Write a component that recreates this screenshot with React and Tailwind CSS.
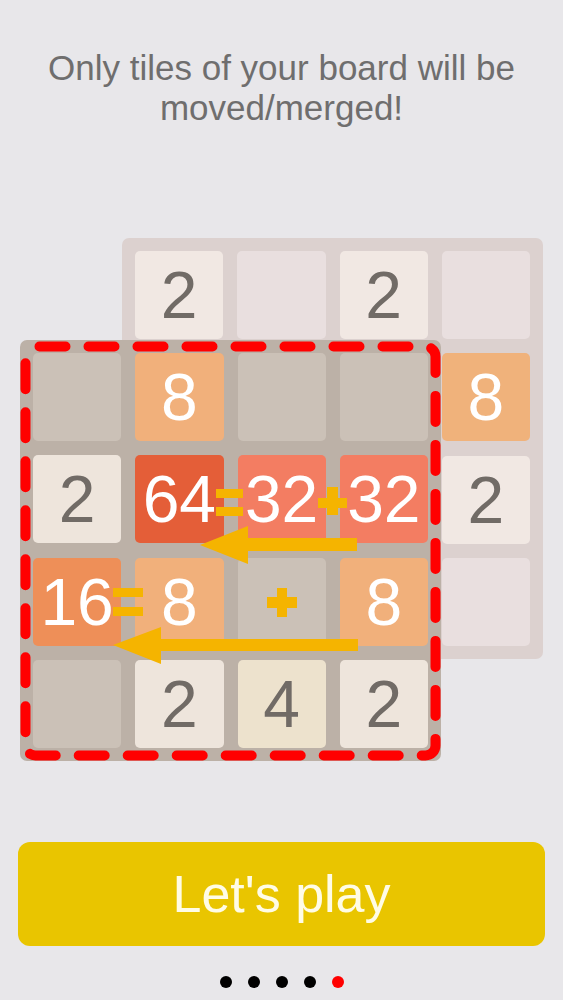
import React from "react";

const FONT = { fontFamily: '"Liberation Sans", Arial, sans-serif' };

// Tile palettes for the dimmed (rear) board and the active (front) board.
const BACK = {
  0: { bg: "bg-[#e9dfdf]", fg: "" },
  2: { bg: "bg-[#f1e8e3]", fg: "text-[#716b66]" },
  8: { bg: "bg-[#f0b27b]", fg: "text-white" },
};

const FRONT = {
  0: { bg: "bg-[#cbc1b7]", fg: "" },
  2: { bg: "bg-[#eee5dc]", fg: "text-[#716b66]" },
  4: { bg: "bg-[#ede2cd]", fg: "text-[#716b66]" },
  8: { bg: "bg-[#f1b07b]", fg: "text-white" },
  16: { bg: "bg-[#ee8f58]", fg: "text-white" },
  32: { bg: "bg-[#f37d62]", fg: "text-white" },
  64: { bg: "bg-[#e45e38]", fg: "text-white" },
};

const backCells = [
  2, 0, 2, 0,
  0, 0, 0, 8,
  0, 0, 0, 2,
  0, 0, 0, 0,
];

const frontCells = [
  0, 8, 0, 0,
  2, 64, 32, 32,
  16, 8, 0, 8,
  0, 2, 4, 2,
];

function Tile({ value, palette }) {
  const p = palette[value] || palette[0];
  return (
    <div
      className={`flex h-[88px] items-center justify-center rounded-[5px] text-[66px] leading-none ${p.bg} ${p.fg}`}
    >
      {value ? value : null}
    </div>
  );
}

function Board({ cells, palette, frame, className = "", children }) {
  return (
    <div
      className={`relative col-start-1 row-start-1 grid h-[421px] w-[421px] grid-cols-4 gap-[14px] rounded-[7px] p-[13px] ${frame} ${className}`}
    >
      {cells.map((v, i) => (
        <Tile key={i} value={v} palette={palette} />
      ))}
      {children}
    </div>
  );
}

// Merge hints, slide arrows and the dashed outline drawn over the front board.
function Overlay() {
  const c = "#f5b400";
  return (
    <svg
      className="pointer-events-none absolute left-0 top-0"
      width="421"
      height="421"
      viewBox="0 0 421 421"
    >
      {/* 64 = 32 */}
      <rect x="196" y="149" width="27" height="9" fill={c} />
      <rect x="196" y="167" width="27" height="9" fill={c} />
      {/* 32 + 32 */}
      <rect x="298" y="158" width="29" height="10" fill={c} />
      <rect x="307" y="147" width="11" height="28" fill={c} />
      {/* + on the empty cell */}
      <rect x="247" y="257" width="30" height="11" fill={c} />
      <rect x="257" y="248" width="10" height="29" fill={c} />
      {/* 16 = 8 */}
      <rect x="93" y="248" width="30" height="9" fill={c} />
      <rect x="93" y="267" width="30" height="9" fill={c} />
      {/* arrows */}
      <polygon
        points="180,205 228,186 228,198 337,198 337,211 228,211 228,224"
        fill={c}
      />
      <polygon
        points="93,305 141,287 141,299 338,299 338,311 141,311 141,324"
        fill={c}
      />
      {/* dashed outline */}
      <rect
        x="5.5"
        y="6.5"
        width="410"
        height="409"
        rx="10"
        fill="none"
        stroke="#ff0000"
        strokeWidth="10"
        strokeLinecap="round"
        strokeDasharray="26 23"
        strokeDashoffset="-4"
      />
    </svg>
  );
}

export default function App() {
  return (
    <div
      className="flex min-h-[1000px] w-[563px] flex-col items-center bg-[#e8e7ea]"
      style={FONT}
    >
      <p className="pt-[48px] text-center text-[35px] leading-[40px] text-[#6f6e6e]">
        Only tiles of your board will be
        <br />
        moved/merged!
      </p>

      <div className="mt-[110px] grid w-[523px] self-start ml-[20px]">
        <Board
          cells={backCells}
          palette={BACK}
          frame="bg-[#dcd1cf]"
          className="ml-[102px]"
        />
        <Board
          cells={frontCells}
          palette={FRONT}
          frame="bg-[#bcb1a7]"
          className="mt-[102px]"
        >
          <Overlay />
        </Board>
      </div>

      <button className="mt-[81px] flex h-[104px] w-[527px] items-center justify-center rounded-[12px] bg-[#e9c500] text-[52px] text-[#fffce6]">
        Let's play
      </button>

      <div className="mt-[30px] flex items-center gap-[16px]">
        <span className="h-[12px] w-[12px] rounded-full bg-black" />
        <span className="h-[12px] w-[12px] rounded-full bg-black" />
        <span className="h-[12px] w-[12px] rounded-full bg-black" />
        <span className="h-[12px] w-[12px] rounded-full bg-black" />
        <span className="h-[12px] w-[12px] rounded-full bg-[#ff0000]" />
      </div>
    </div>
  );
}
